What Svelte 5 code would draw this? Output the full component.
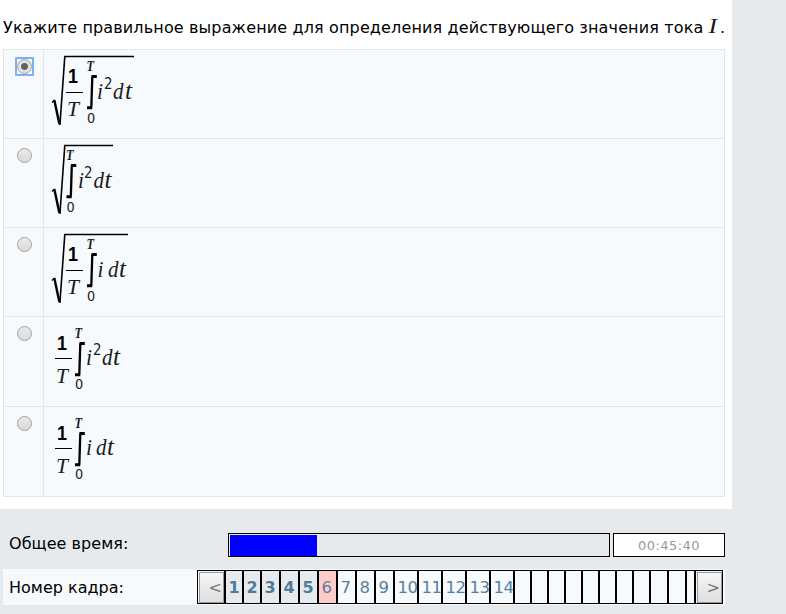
<script>
  const options = [
    { root: 134, frac: 66, int: 87, square: 105, i: 97, d: 113, t: 125, h: 89, drop: 0 },
    { root: 113, frac: null, int: 66.5, square: 85, i: 78, d: 93.5, t: 104.5, h: 89, drop: 0 },
    { root: 128, frac: 66, int: 87, square: null, i: 97.5, d: 108, t: 119, h: 89, drop: 0 },
    { root: null, frac: 55, int: 75, square: 93.8, i: 86, d: 102, t: 113, h: 90, drop: -1 },
    { root: null, frac: 55, int: 75, square: null, i: 86, d: 96, t: 107, h: 90, drop: -1 }
  ];
  let selected = $state(0);

  const widths = [18, 18, 19, 19, 19, 19, 19, 19, 19, 24, 24, 24, 24, 24, 17, 17, 17, 17, 17, 17, 17, 17, 18, 18, 9];
  const frames = widths.map((w, k) => ({ w, label: k < 14 ? k + 1 : '', done: k < 5, current: k === 5 }));
</script>

<div class="page">
  <main>
    <p class="question"><span class="qtext">Укажите правильное выражение для определения действующего значения тока</span><svg class="sym" width="13" height="20" viewBox="0 0 13 20"><text x="1.5" y="15" font-size="22" textLength="8.5" lengthAdjust="spacingAndGlyphs">I</text></svg><span>.</span></p>
    <div class="options">
      {#each options as o, k}
        <label class="row" style="height:{o.h}px">
          <span class="pick"><input type="radio" name="answer" value={k} bind:group={selected} class:focused={selected === k} /></span>
          <svg class="formula" width="96" height="88" viewBox="44 1 96 88">
            {#if o.root}
              <path d="M52 53.5L54.5 51" stroke-width="1.2" />
              <path d="M54.3 51L59.4 75" stroke-width="2.4" />
              <path d="M59.9 76L64.8 7.5" stroke-width="1.6" />
              <path d="M64.2 7.5H{o.root}" stroke-width="1.3" />
            {/if}
            {#if o.frac}
              <text class="one" x={o.frac + 2} y="34" font-size="20" textLength="10" lengthAdjust="spacingAndGlyphs">1</text>
              <path d="M{o.frac} {43.5 + o.drop}h17" stroke-width="1" />
              <text x={o.frac + 1} y="67" font-size="22" textLength="12" lengthAdjust="spacingAndGlyphs">T</text>
            {/if}
            <g transform="translate({o.int} 0)">
              <text x="-0.5" y="22" font-size="14" textLength="7.5" lengthAdjust="spacingAndGlyphs" class="limit">T</text>
              <path d="M5.3 27.5L4.3 58.5" stroke-width="2.3" />
              <path d="M4.5 27.5H9.8M0 58.8H5.2" stroke-width="3" />
              <text class="sans" x="0" y={74 + o.drop} font-size="14" textLength="8.2" lengthAdjust="spacingAndGlyphs">0</text>
            </g>
            <text x={o.i} y={49.5 + o.drop} font-size="24" textLength="6" lengthAdjust="spacingAndGlyphs">i</text>
            {#if o.square}
              <text class="sans" x={o.square - 0.9} y={39.5 + o.drop} font-size="15" textLength="8.5" lengthAdjust="spacingAndGlyphs">2</text>
            {/if}
            <text x={o.d} y={49.5 + o.drop} font-size="24" textLength="10.5" lengthAdjust="spacingAndGlyphs">d</text>
            <text x={o.t} y={49.5 + o.drop} font-size="25" textLength="7" lengthAdjust="spacingAndGlyphs">t</text>
          </svg>
        </label>
      {/each}
    </div>
  </main>

  <section class="time">
    <span class="label">Общее время:</span>
    <div class="progress"><div class="fill"></div></div>
    <div class="clock"><span>00:45:40</span></div>
  </section>

  <nav>
    <span class="label">Номер кадра:</span>
    <div class="cell edge first"><button>&lt;</button></div>
    {#each frames as f}
      <div class="cell" class:done={f.done} class:current={f.current} style="width:{f.w}px">{f.label}</div>
    {/each}
    <div class="cell edge last"><button>&gt;</button></div>
  </nav>
</div>

<style>
  :global(body) { margin: 0; background: #e6eaed; }
  .page {
    width: 786px; height: 614px; overflow: hidden; background: #e6eaed;
    font-family: "DejaVu Sans", sans-serif; font-size: 16px; color: #000;
  }
  main { box-sizing: border-box; width: 732px; height: 509px; background: #fff; padding: 18px 7px 0 3px; }
  .question { margin: 0; height: 31px; display: flex; align-items: flex-start; line-height: 20px; white-space: nowrap; }
  .qtext { width: 704px; letter-spacing: 0.14px; }
  .sym { display: block; flex: none; overflow: visible; }
  .options { box-sizing: border-box; width: 722px; border: 1px solid #e2e7eb; border-top: 0; background: #f6fafd; }
  .row { display: flex; box-sizing: border-box; border-top: 1px solid #e2e7eb; }
  .pick { width: 39px; border-right: 1px solid #e2e7eb; box-sizing: content-box; }
  .formula { display: block; flex: none; }
  .formula path { fill: none; stroke: #000; }
  text { font-family: "Liberation Serif", serif; font-style: italic; fill: #1a1a1a; }
  .one { font-family: "Liberation Sans", sans-serif; font-style: normal; font-weight: bold; fill: #000; }
  .sans { font-family: "DejaVu Sans", sans-serif; font-style: normal; }
  .limit { font-weight: bold; }
  input {
    appearance: none; display: block; box-sizing: border-box; position: relative;
    width: 15px; height: 15px; margin: 9px 0 0 13px;
    border: 1px solid #a3a3a3; border-radius: 50%; background: linear-gradient(#e9e9e9, #dadada);
  }
  input:checked { background: radial-gradient(circle, #606060 0 3px, #e2e2e2 4px); }
  input:focus { outline: none; }
  .focused::after { content: ""; position: absolute; inset: -3px; border: 2px solid #82aff0; border-radius: 1px; }
  .label { letter-spacing: 0.05px; white-space: nowrap; }
  .time { display: flex; padding: 24px 0 0 9px; height: 36px; }
  .time .label { width: 219px; line-height: 21px; }
  .progress { box-sizing: border-box; width: 382px; height: 24px; border: 1px solid #000; padding: 1px; }
  .fill { width: 87px; height: 21px; background: #00f; }
  .clock {
    box-sizing: border-box; width: 112px; height: 24px; margin-left: 3px; border: 1px solid #000; background: #fff;
    color: #999; font-size: 13px; line-height: 24px; text-align: center; letter-spacing: 0.45px;
  }
  nav { box-sizing: border-box; display: flex; align-items: center; width: 722px; height: 36px; margin-left: 3px; background: #f6fafd; }
  nav .label { width: 188px; padding-left: 6px; flex: none; letter-spacing: 0; }
  .cell {
    box-sizing: border-box; flex: none; height: 34px; border: 1px solid #000; padding-left: 2.5px;
    line-height: 33px; font-size: 16.5px; letter-spacing: -0.4px; color: #5580a0; background: #f6fafd; white-space: nowrap;
  }
  .done { background: #e6eaed; font-weight: bold; font-size: 16px; color: #4e7b9a; }
  .current { background: #ffcaca; }
  .edge { width: 28px; padding: 1px 0 0 1px; }
  .edge button {
    display: block; box-sizing: border-box; width: 25px; height: 31px; margin: 0; padding: 0 1px 0 0; border: 1px solid #999;
    background: linear-gradient(#f6f6f6, #dedede); color: #777; font: 16px/29px "DejaVu Sans", sans-serif; text-align: right;
  }
</style>
